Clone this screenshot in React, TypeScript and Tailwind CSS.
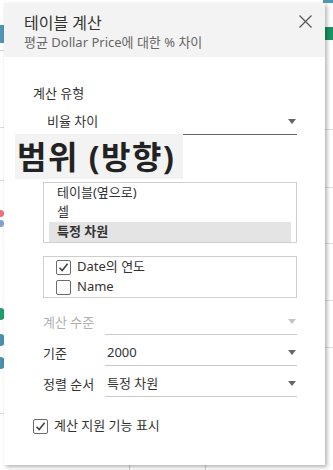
import React from "react"

const font = "font-['Noto_Sans','Noto_Sans_CJK_KR',sans-serif]"

const Caret = ({ light }: { light?: boolean }) => (
    <svg width="8" height="5" viewBox="0 0 8 5" className="shrink-0">
        <path d="M0 0 L8 0 L4 5 Z" fill={light ? "#c4c4c4" : "#666"} />
    </svg>
)

const Check = ({ checked }: { checked?: boolean }) => (
    <div className="w-[15px] h-[15px] shrink-0 border border-[#6b6b6b] rounded-[2px] bg-white flex items-center justify-center">
        {checked && (
            <svg width="11" height="11" viewBox="0 0 11 11">
                <path d="M1.5 5.8 L4.2 8.6 L9.6 1.8" fill="none" stroke="#444" strokeWidth="1.6" />
            </svg>
        )}
    </div>
)

const Row = ({ label, value, light, className }: { label: string; value: string; light?: boolean; className?: string }) => (
    <div className={`flex items-center h-[24px] ml-[39px] mr-[28px] ${className ?? ""}`}>
        <div className={`w-[62px] text-[13px] ${light ? "text-[#b0b0b0]" : "text-[#333]"}`}>{label}</div>
        <div className="flex-1 h-full flex items-center justify-between pl-[2px] pr-[1px] pb-[2px] border-b border-[#c8c8c8]">
            <span className="text-[13px] text-[#333]">{value}</span>
            <Caret light={light} />
        </div>
    </div>
)

export default function App() {
    return (
        <div className={`relative w-[333px] h-[470px] overflow-hidden bg-white ${font}`}>
            {/* background app slivers */}
            <div className="absolute left-0 top-[25px] w-[5px] h-[18px] bg-[#4f97b5]" />
            <div className="absolute left-0 top-[50px] w-[5px] h-px bg-[#d6d6d6]" />
            <div className="absolute left-0 top-[127px] w-[5px] h-px bg-[#dcdcdc]" />
            <div className="absolute left-0 top-[180px] w-[5px] h-px bg-[#dcdcdc]" />
            <div className="absolute left-[-3px] top-[210px] w-[7px] h-[7px] rounded-full bg-[#e8707f]" />
            <div className="absolute left-[-3px] top-[220px] w-[7px] h-[7px] rounded-full bg-[#7fa3cf]" />
            <div className="absolute left-[-4px] top-[308px] w-[9px] h-[12px] rounded-full bg-[#1f9d6d]" />
            <div className="absolute left-[-4px] top-[334px] w-[9px] h-[12px] rounded-full bg-[#4a90b0]" />
            <div className="absolute left-[-4px] top-[357px] w-[9px] h-[12px] rounded-full bg-[#4a90b0]" />
            <div className="absolute left-0 top-[413px] w-[5px] h-px bg-[#dcdcdc]" />
            <div className="absolute right-0 top-0 w-[10px] h-[3px] bg-[#4f97b5]" />
            <div className="absolute right-0 top-[27px] w-[8px] h-[13px] bg-[#1a9464]" />
            <div className="absolute right-0 top-[129px] w-[8px] h-px bg-[#dcdcdc]" />
            <div className="absolute right-0 top-[187px] w-[8px] h-px bg-[#dcdcdc]" />
            <div className="absolute right-0 top-[243px] w-[8px] h-px bg-[#dcdcdc]" />
            <div className="absolute right-0 top-[300px] w-[8px] h-px bg-[#dcdcdc]" />
            <div className="absolute right-0 top-[347px] w-[8px] h-px bg-[#dcdcdc]" />
            <div className="absolute left-[129px] top-[465px] w-px h-[5px] bg-[#d0d0d0]" />
            <div className="absolute left-[205px] top-[465px] w-px h-[5px] bg-[#d0d0d0]" />

            {/* dialog */}
            <div className="absolute left-[4px] top-[3px] w-[321px] h-[462px] bg-white shadow-[2px_2px_4px_rgba(0,0,0,0.3)] flex flex-col">
                <div className="h-[54px] bg-[#f3f3f3] flex justify-between pl-[20px] pr-[13px] pt-[9px]">
                    <div className="flex flex-col">
                        <div className="text-[16px] leading-[22px] text-[#333]">테이블 계산</div>
                        <div className="text-[13px] leading-[17px] text-[#666]">평균 Dollar Price에 대한 % 차이</div>
                    </div>
                    <svg width="13" height="13" viewBox="0 0 13 13" className="mt-[3px]">
                        <path d="M0.5 0.5 L12.5 12.5 M12.5 0.5 L0.5 12.5" stroke="#555" strokeWidth="1.2" />
                    </svg>
                </div>

                <div className="mt-[27px] ml-[29px] text-[13px] leading-[18px] text-[#333]">계산 유형</div>

                <div className="mt-[9px] ml-[38px] mr-[28px] h-[24px] flex items-center justify-between pl-[5px] pr-[1px] pb-[2px] border-b border-[#666]">
                    <span className="text-[13px] text-[#333]">비율 차이</span>
                    <Caret />
                </div>

                <div className="relative h-[47px]">
                    <div className="absolute left-[41px] top-[12px] text-[13px] leading-[18px] text-[#333]">다음을 사용하여 계산</div>
                    <div className="absolute left-[11px] top-[-1px] w-[168px] h-[45px] bg-[#f3f3f3] flex items-center pl-[2px]">
                        <span className="text-[32px] font-bold text-[#222] leading-none tracking-[1.5px]">범위 (방향)</span>
                    </div>
                </div>

                <div className="ml-[39px] mr-[28px] h-[61px] border border-[#cfcfcf] flex flex-col px-[5px]">
                    <div className="h-[19px] flex items-center pl-[8px] text-[13px] text-[#333]">테이블(옆으로)</div>
                    <div className="h-[20px] flex items-center pl-[8px] text-[13px] text-[#333]">셀</div>
                    <div className="h-[20px] flex items-center pl-[8px] bg-[#e4e4e4] text-[13px] font-bold text-[#333]">특정 차원</div>
                </div>

                <div className="mt-[13px] ml-[39px] mr-[28px] h-[42px] border border-[#cfcfcf] flex flex-col justify-center gap-[5px] pl-[12px]">
                    <div className="flex items-center gap-[6px] h-[15px]">
                        <Check checked />
                        <span className="text-[13px] text-[#333]">Date의 연도</span>
                    </div>
                    <div className="flex items-center gap-[6px] h-[15px]">
                        <Check />
                        <span className="text-[13px] text-[#333]">Name</span>
                    </div>
                </div>

                <Row label="계산 수준" value="" light className="mt-[13px]" />
                <Row label="기준" value="2000" className="mt-[7px]" />
                <Row label="정렬 순서" value="특정 차원" className="mt-[7px]" />

                <div className="mt-[21px] ml-[29px] flex items-center gap-[6px] h-[16px]">
                    <Check checked />
                    <span className="text-[13px] text-[#333]">계산 지원 기능 표시</span>
                </div>
            </div>
        </div>
    )
}
